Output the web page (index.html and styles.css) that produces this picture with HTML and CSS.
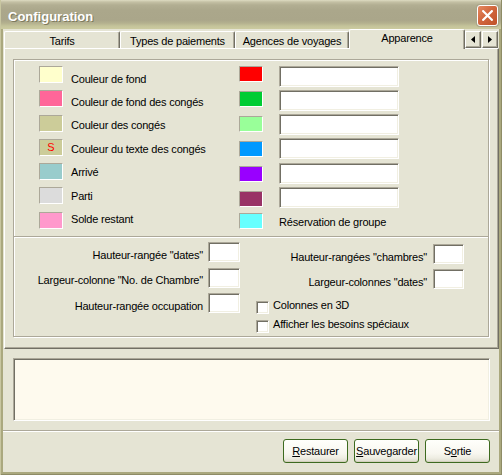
FILE: index.html
```html
<!DOCTYPE html>
<html lang="fr">
<head>
<meta charset="utf-8">
<title>Configuration</title>
<link rel="stylesheet" href="styles.css">
</head>
<body>
<div class="window">
  <div class="titlebar">
    <div class="title">Configuration</div>
    <div class="close">
      <svg width="11" height="11" viewBox="0 0 11 11"><path d="M1.2 1.2L9.8 9.8M9.8 1.2L1.2 9.8" stroke="#fff" stroke-width="2.2" stroke-linecap="square"/></svg>
    </div>
  </div>
  <div class="client">
    <div class="tabstrip">
      <div class="tab w1">Tarifs</div>
      <div class="tab w2">Types de paiements</div>
      <div class="tab w3">Agences de voyages</div>
      <div class="tab active">Apparence</div>
      <div class="spin">
        <div class="spinbtn"><svg width="4" height="7" viewBox="0 0 4 7"><path d="M4 0V7L0 3.5Z" fill="#000"/></svg></div>
        <div class="spinbtn"><svg width="4" height="7" viewBox="0 0 4 7"><path d="M0 0V7L4 3.5Z" fill="#000"/></svg></div>
      </div>
    </div>
    <div class="panel">
      <div class="group">
        <div class="sec-top">
          <div class="sw-left">
            <div class="sw c-fond"></div>
            <div class="sw c-fondconges"></div>
            <div class="sw c-conges"></div>
            <div class="sw c-texte">S</div>
            <div class="sw c-arrive"></div>
            <div class="sw c-parti"></div>
            <div class="sw c-solde"></div>
          </div>
          <div class="labels">
            <div class="lbl">Couleur de fond</div>
            <div class="lbl">Couleur de fond des congés</div>
            <div class="lbl">Couleur des congés</div>
            <div class="lbl">Couleur du texte des congés</div>
            <div class="lbl">Arrivé</div>
            <div class="lbl">Parti</div>
            <div class="lbl">Solde restant</div>
          </div>
          <div class="sw-right">
            <div class="sw2 c-red"></div>
            <div class="sw2 c-green"></div>
            <div class="sw2 c-lgreen"></div>
            <div class="sw2 c-blue"></div>
            <div class="sw2 c-purple"></div>
            <div class="sw2 c-maroon"></div>
            <div class="sw2 c-cyan last"></div>
          </div>
          <div class="inputs">
            <div class="field wide"></div>
            <div class="field wide"></div>
            <div class="field wide"></div>
            <div class="field wide"></div>
            <div class="field wide"></div>
            <div class="field wide"></div>
            <div class="lbl resa">Réservation de groupe</div>
          </div>
        </div>
        <div class="divider"></div>
        <div class="sec-bottom">
          <div class="bleft">
            <div class="frow"><span class="flbl">Hauteur-rangée "dates"</span><div class="field small"></div></div>
            <div class="frow"><span class="flbl">Largeur-colonne "No. de Chambre"</span><div class="field small"></div></div>
            <div class="frow"><span class="flbl">Hauteur-rangée occupation</span><div class="field small"></div></div>
          </div>
          <div class="bright">
            <div class="frow r"><span class="flbl">Hauteur-rangées "chambres"</span><div class="field small2"></div></div>
            <div class="frow r"><span class="flbl">Largeur-colonnes "dates"</span><div class="field small2"></div></div>
            <div class="crow first"><div class="check"></div><span>Colonnes en 3D</span></div>
            <div class="crow"><div class="check"></div><span>Afficher les besoins spéciaux</span></div>
          </div>
        </div>
      </div>
    </div>
    <div class="memo"></div>
    <div class="sep"></div>
    <div class="buttons">
      <div class="btn"><u>R</u>estaurer</div>
      <div class="btn"><u>S</u>auvegarder</div>
      <div class="btn">S<u>o</u>rtie</div>
    </div>
  </div>
</div>
</body>
</html>
```

FILE: styles.css
```css
* { box-sizing: border-box; }
html, body { margin: 0; padding: 0; }
body {
  width: 502px;
  height: 475px;
  overflow: hidden;
  background: #ffffff;
  font-family: "Liberation Sans", Arial, sans-serif;
  font-size: 11px;
  letter-spacing: -0.2px;
  color: #000;
}

.window {
  width: 502px;
  height: 475px;
  display: flex;
  flex-direction: column;
  background: #aaa87e;
  padding: 0 3px 3px 3px;
  box-shadow: inset 1px 0 #c8c6a0, inset -1px 0 #8e8c66, inset 0 -1px #8e8c66;
}

.titlebar {
  height: 29px;
  margin: 0 -3px;
  display: flex;
  justify-content: space-between;
  align-items: flex-start;
  padding: 0 4px 0 8px;
  background: linear-gradient(#dedbc2 0px, #c4c0a4 2px, #b2ae92 5px, #aba78b 10px, #aaa68a 20px, #b3b08e 23px, #c4c39a 26px, #cccba0 29px);
  box-shadow: inset 1px 0 #c8c6a0, inset -1px 0 #8e8c66;
}
.title {
  margin-top: 9px;
  line-height: 15px;
  font-size: 13px;
  font-weight: bold;
  letter-spacing: 0;
  color: #ffffff;
  text-shadow: 1px 1px 0 #7d7a5e;
}
.close {
  margin-top: 5px;
  width: 21px;
  height: 21px;
  border-radius: 3px;
  border: 1px solid #ffffff;
  background: linear-gradient(135deg, #e58a62 0%, #d2673d 45%, #bf5229 100%);
  box-shadow: 0 0 0 1px #a8a487;
  display: flex;
  align-items: center;
  justify-content: center;
}

.client {
  flex: 1;
  display: flex;
  flex-direction: column;
  background: #e5e4d4;
}

/* tabs */
.tabstrip {
  height: 19px;
  margin-left: 1px;
  display: flex;
  align-items: flex-end;
}
.tab {
  height: 17px;
  padding-top: 2px;
  line-height: 14px;
  text-align: center;
  border-top: 1px solid #ffffff;
  border-left: 1px solid #ffffff;
  border-right: 1px solid #716f64;
  box-shadow: inset -1px 0 #aca899;
  border-radius: 2px 2px 0 0;
  white-space: nowrap;
}
.w1 { width: 116px; }
.w2 { width: 115px; }
.w3 { width: 114px; }
.tab.active {
  width: 116px;
  height: 20px;
  padding-top: 1px;
  margin-bottom: -1px;
  background: #e5e4d4;
  position: relative;
  z-index: 1;
}
.spin {
  display: flex;
  gap: 1px;
}
.spinbtn {
  width: 16px;
  height: 17px;
  border-top: 1px solid #ffffff;
  border-left: 1px solid #ffffff;
  border-right: 1px solid #716f64;
  border-bottom: 1px solid #716f64;
  box-shadow: inset -1px -1px #aca899;
  display: flex;
  align-items: center;
  justify-content: center;
}

/* panel */
.panel {
  height: 301px;
  margin-left: 1px;
  border-top: 1px solid #ffffff;
  border-left: 1px solid #ffffff;
  border-right: 1px solid #716f64;
  border-bottom: 1px solid #716f64;
  box-shadow: inset -1px -1px #aca899;
  padding: 10px 8px 11px 8px;
}
.group {
  width: 476px;
  height: 278px;
  border: 1px solid #aca899;
  box-shadow: inset 1px 1px #ffffff, 1px 1px 0 #ffffff;
  display: flex;
  flex-direction: column;
}
.sec-top {
  height: 176px;
  display: flex;
  padding-left: 25px;
}
.divider {
  height: 2px;
  border-top: 1px solid #aca899;
  border-bottom: 1px solid #ffffff;
}
.sec-bottom {
  height: 98px;
  display: flex;
}

.sw-left {
  width: 24px;
  margin-right: 8px;
  padding-top: 6px;
  display: flex;
  flex-direction: column;
  gap: 7.3px;
}
.sw {
  width: 24px;
  height: 17px;
  border-top: 1px solid #aca899;
  border-left: 1px solid #aca899;
  border-right: 1px solid #ffffff;
  border-bottom: 1px solid #ffffff;
  color: #ff0000;
  text-align: center;
  line-height: 15px;
  letter-spacing: 0;
}
.labels {
  width: 168px;
  padding-top: 11.5px;
  display: flex;
  flex-direction: column;
  gap: 9.45px;
}
.lbl {
  line-height: 14px;
  white-space: nowrap;
}
.sw-right {
  width: 24px;
  margin-right: 16px;
  padding-top: 6px;
  display: flex;
  flex-direction: column;
  gap: 9px;
}
.sw2 {
  width: 24px;
  height: 16px;
  border-top: 1px solid #aca899;
  border-left: 1px solid #aca899;
  border-right: 1px solid #ffffff;
  border-bottom: 1px solid #ffffff;
}
.sw2.last { margin-top: -3px; }
.inputs {
  width: 120px;
  padding-top: 6px;
  display: flex;
  flex-direction: column;
  gap: 3.13px;
}
.lbl.resa { margin-top: 4.7px; }

.field {
  background: #ffffff;
  border-top: 1px solid #aca899;
  border-left: 1px solid #aca899;
  border-right: 1px solid #ffffff;
  border-bottom: 1px solid #ffffff;
  box-shadow: inset 1px 1px #716f64, inset -1px -1px #f1efe2;
}
.field.wide { width: 120px; height: 21px; }
.field.small { width: 32px; height: 20px; }
.field.small2 { width: 31px; height: 20px; }

.bleft {
  width: 226px;
  padding-top: 4px;
  display: flex;
  flex-direction: column;
  align-items: flex-end;
  gap: 5.5px;
}
.frow {
  height: 20px;
  display: flex;
  align-items: flex-start;
  gap: 5px;
}
.flbl {
  padding-top: 6.6px;
  line-height: 13px;
  white-space: nowrap;
}
.frow.r { gap: 6px; }
.frow.r .flbl { padding-top: 7px; }
.bright {
  width: 208px;
  margin-left: 16px;
  padding-top: 6px;
  display: flex;
  flex-direction: column;
  align-items: flex-end;
  gap: 5px;
}
.crow {
  align-self: flex-start;
  height: 14px;
  line-height: 14px;
  display: flex;
  align-items: flex-start;
  gap: 4px;
  white-space: nowrap;
}
.crow.first { margin-top: 4px; }
.check {
  width: 13px;
  height: 13px;
  margin-top: 3px;
  background: #ffffff;
  border-top: 1px solid #aca899;
  border-left: 1px solid #aca899;
  border-right: 1px solid #ffffff;
  border-bottom: 1px solid #ffffff;
  box-shadow: inset 1px 1px #716f64, inset -1px -1px #f1efe2;
}

.c-fond { background: #ffffcc; }
.c-fondconges { background: #ff6699; }
.c-conges { background: #cccc99; }
.c-texte { background: #cccc99; }
.c-arrive { background: #99cccc; }
.c-parti { background: #dcdcdc; }
.c-solde { background: #ff99cc; }
.c-red { background: #ff0000; }
.c-green { background: #00cc33; }
.c-lgreen { background: #99ff99; }
.c-blue { background: #0099ff; }
.c-purple { background: #9900ff; }
.c-maroon { background: #993366; }
.c-cyan { background: #66ffff; }

/* memo */
.memo {
  height: 63px;
  margin: 9px 9px 0 10px;
  background: #fefaee;
  border-top: 1px solid #aca899;
  border-left: 1px solid #aca899;
  border-right: 1px solid #ffffff;
  border-bottom: 1px solid #ffffff;
  box-shadow: inset 1px 1px #716f64, inset -1px -1px #f1efe2;
}
.sep {
  height: 2px;
  margin-top: 9px;
  border-top: 1px solid #aca899;
  border-bottom: 1px solid #ffffff;
}
.buttons {
  margin-top: 7px;
  padding-right: 9px;
  display: flex;
  justify-content: flex-end;
  gap: 6px;
}
.btn {
  width: 65px;
  height: 24px;
  border: 1px solid #3d6a1f;
  border-radius: 3px;
  background: linear-gradient(#fffffb 0%, #f8f7f0 60%, #eeede2 82%, #dcdacb 100%);
  box-shadow: inset 0 -1px #d3d0bc;
  display: flex;
  align-items: center;
  justify-content: center;
  white-space: nowrap;
  line-height: 14px;
}
.btn u { text-decoration: underline; text-underline-offset: 1px; }
```
